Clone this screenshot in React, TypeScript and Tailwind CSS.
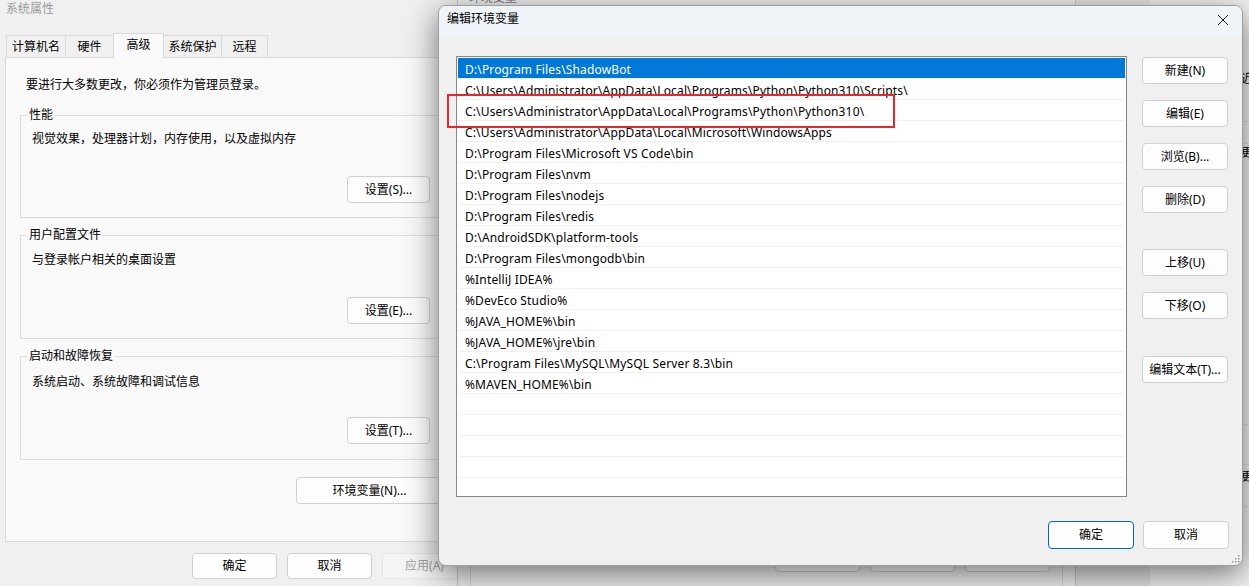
import React from 'react';

const paths = [
  'D:\\Program Files\\ShadowBot',
  'C:\\Users\\Administrator\\AppData\\Local\\Programs\\Python\\Python310\\Scripts\\',
  'C:\\Users\\Administrator\\AppData\\Local\\Programs\\Python\\Python310\\',
  'C:\\Users\\Administrator\\AppData\\Local\\Microsoft\\WindowsApps',
  'D:\\Program Files\\Microsoft VS Code\\bin',
  'D:\\Program Files\\nvm',
  'D:\\Program Files\\nodejs',
  'D:\\Program Files\\redis',
  'D:\\AndroidSDK\\platform-tools',
  'D:\\Program Files\\mongodb\\bin',
  '%IntelliJ IDEA%',
  '%DevEco Studio%',
  '%JAVA_HOME%\\bin',
  '%JAVA_HOME%\\jre\\bin',
  'C:\\Program Files\\MySQL\\MySQL Server 8.3\\bin',
  '%MAVEN_HOME%\\bin',
  '',
  '',
  '',
  '',
  '',
];

function WinButton({
  children,
  className = '',
  primary = false,
  disabled = false,
}: {
  children: React.ReactNode;
  className?: string;
  primary?: boolean;
  disabled?: boolean;
}) {
  return (
    <button
      className={
        'flex items-center justify-center rounded-[4px] border text-[12px] leading-[16px] ' +
        (primary
          ? 'border-[#0067c0] bg-[#fdfdfd] text-black '
          : disabled
          ? 'border-[#e5e5e5] bg-[#f5f5f5] text-[#a0a0a0] '
          : 'border-[#d0d0d0] bg-[#fdfdfd] text-black ') +
        className
      }
    >
      {children}
    </button>
  );
}

function GroupBox({
  title,
  text,
  textTop,
  buttonTop,
  buttonLabel,
  className = '',
  bottom = 'pb-[14px]',
}: {
  title: string;
  text: string;
  textTop: string;
  buttonTop: string;
  buttonLabel: string;
  className?: string;
  bottom?: string;
}) {
  return (
    <fieldset className={'flex flex-col border border-[#dcdcdc] pl-[6px] pr-[21px] ' + bottom + ' ' + className}>
      <legend className="px-[2px] leading-[16px]">{title}</legend>
      <p className={'ml-[5px] ' + textTop}>{text}</p>
      <WinButton className={'self-end w-[83px] h-[27px] ' + buttonTop}>{buttonLabel}</WinButton>
    </fieldset>
  );
}

function SystemProperties() {
  const tabs = [
    { label: '计算机名', w: 'w-[60px]' },
    { label: '硬件', w: 'w-[49px]' },
    { label: '高级', w: 'w-[51px]', active: true },
    { label: '系统保护', w: 'w-[59px]' },
    { label: '远程', w: 'w-[47px]' },
  ];
  return (
    <div className="absolute left-0 top-0 w-[474px] h-[586px] bg-[#f0f0f0] flex flex-col">
      <div className="h-[24px] pl-[6px] pt-px text-[#9b9b9b]">系统属性</div>
      <div className="h-[33px] flex items-end pl-[6px]">
        {tabs.map((t, i) => (
          <div
            key={t.label}
            className={
              'flex items-center justify-center border border-b-0 border-[#d9d9d9] ' +
              t.w +
              (i > 0 ? ' -ml-px' : '') +
              (t.active ? ' relative z-10 h-[25px] -mb-px bg-[#f9f9f9] pb-[3px]' : ' h-[22px] bg-[#f0f0f0]')
            }
          >
            {t.label}
          </div>
        ))}
      </div>
      <div className="mx-[5px] h-[485px] border border-[#d9d9d9] bg-[#f9f9f9] pt-[19px] pl-[14px] pr-[16px] flex flex-col">
        <p className="ml-[6px]">要进行大多数更改，你必须作为管理员登录。</p>
        <GroupBox
          className="mt-[14px]"
          title="性能"
          text="视觉效果，处理器计划，内存使用，以及虚拟内存"
          textTop="mt-[8px]"
          buttonTop="mt-[29px]"
          buttonLabel="设置(S)..."
        />
        <GroupBox
          className="mt-[9px]"
          title="用户配置文件"
          text="与登录帐户相关的桌面设置"
          textTop="mt-[9px]"
          buttonTop="mt-[29px]"
          buttonLabel="设置(E)..."
        />
        <GroupBox
          className="mt-[9px]"
          title="启动和故障恢复"
          text="系统启动、系统故障和调试信息"
          textTop="mt-[10px]"
          buttonTop="mt-[27px]"
          buttonLabel="设置(T)..."
          bottom="pb-[15px]"
        />
        <WinButton className="self-end mr-[9px] mt-[17px] w-[147px] h-[27px]">环境变量(N)...</WinButton>
      </div>
      <div className="mt-[11px] flex justify-end gap-[10px] pr-[7px]">
        <WinButton className="w-[85px] h-[26px]">确定</WinButton>
        <WinButton className="w-[85px] h-[26px]">取消</WinButton>
        <WinButton className="w-[85px] h-[26px]" disabled>
          应用(A)
        </WinButton>
      </div>
    </div>
  );
}

function EnvWindow() {
  return (
    <div className="absolute left-[457px] top-[-20px] w-[619px] h-[640px] border-x border-[#c9c9c9] bg-[#f0f0f0] flex flex-col">
      <div className="h-[36px] flex items-center pl-[11px] text-[#777]">环境变量</div>
      <div className="flex-1 mx-[12px] border-x border-[#d5d5d5]">
        <div className="mt-[530px] flex justify-end gap-[10px] pr-[12px]">
          <WinButton className="w-[85px] h-[26px]">新建(W)...</WinButton>
          <WinButton className="w-[85px] h-[26px]">编辑(I)...</WinButton>
          <WinButton className="w-[85px] h-[26px]">删除(L)</WinButton>
        </div>
      </div>
    </div>
  );
}

function RightWindow() {
  return (
    <div className="absolute left-[1150px] top-0 w-[200px] h-[586px] bg-[#f3f3f3] flex flex-col">
      <div className="h-[70px]" />
      <div className="h-[18px] pl-[91px] leading-[18px]">近</div>
      <div className="h-[34px] border-b border-[#e2e2e2]" />
      <div className="h-[22px] border-b border-[#e2e2e2]" />
      <div className="h-[18px] pl-[91px] leading-[18px]">更</div>
      <div className="h-[263px] border-b border-[#e2e2e2]" />
      <div className="h-[40px] border-b border-[#e2e2e2]" />
      <div className="h-[24px] pl-[91px] leading-[24px]">更</div>
      <div className="h-[18px] border-b border-[#e2e2e2]" />
    </div>
  );
}

function EditDialog() {
  return (
    <div className="absolute left-[438px] top-[5px] w-[805px] h-[561px] rounded-[8px] border border-[#9e9e9e] bg-[#f0f0f0] shadow-[0_8px_32px_rgba(0,0,0,0.55)] flex flex-col overflow-hidden">
      <div className="h-[30px] shrink-0 bg-[#eff4f9] flex items-start justify-between pl-[8px] pt-[5px] pr-[10px]">
        <span>编辑环境变量</span>
        <svg width="12" height="12" viewBox="0 0 12 12" className="mt-[3px] mr-[3px]">
          <path d="M1 1 L11 11 M11 1 L1 11" stroke="#1b1b1b" strokeWidth="1" fill="none" />
        </svg>
      </div>
      <div className="flex pl-[17px] pt-[20px]">
        <div className="w-[671px] h-[441px] border border-[#868686] bg-white p-px overflow-hidden">
          {paths.map((p, i) => (
            <div
              key={i}
              className={
                'h-[21px] flex items-center pl-[7px] pt-[3px] border-b border-[#f0f0f0] whitespace-nowrap tracking-[0.15px] ' +
                (i === 0 ? 'bg-[#0078d7] text-white' : 'text-black')
              }
            >
              {p}
            </div>
          ))}
        </div>
        <div className="ml-[15px] w-[86px] flex flex-col">
          <WinButton className="mt-[1px] h-[27px]">新建(N)</WinButton>
          <WinButton className="mt-[16px] h-[27px]">编辑(E)</WinButton>
          <WinButton className="mt-[16px] h-[27px]">浏览(B)...</WinButton>
          <WinButton className="mt-[16px] h-[27px]">删除(D)</WinButton>
          <WinButton className="mt-[36px] h-[27px]">上移(U)</WinButton>
          <WinButton className="mt-[16px] h-[27px]">下移(O)</WinButton>
          <WinButton className="mt-[37px] h-[27px]">编辑文本(T)...</WinButton>
        </div>
      </div>
      <div className="mt-[24px] flex justify-end gap-[9px] pr-[13px]">
        <WinButton primary className="w-[86px] h-[28px]">
          确定
        </WinButton>
        <WinButton className="w-[86px] h-[28px]">取消</WinButton>
      </div>
      <div className="absolute left-[8px] top-[88px] w-[448px] h-[34px] border-2 border-[#e8262b]" />
      <svg width="8" height="8" viewBox="0 0 8 8" className="absolute right-[2px] bottom-[2px]">
        <rect x="6" y="0" width="1.5" height="1.5" fill="#9a9a9a" />
        <rect x="3" y="3" width="1.5" height="1.5" fill="#9a9a9a" />
        <rect x="6" y="3" width="1.5" height="1.5" fill="#9a9a9a" />
        <rect x="0" y="6" width="1.5" height="1.5" fill="#9a9a9a" />
        <rect x="3" y="6" width="1.5" height="1.5" fill="#9a9a9a" />
        <rect x="6" y="6" width="1.5" height="1.5" fill="#9a9a9a" />
      </svg>
    </div>
  );
}

export default function App() {
  return (
    <div className="relative w-[1249px] h-[586px] overflow-hidden bg-[#e6e6e6] font-['Noto_Sans','Noto_Sans_CJK_SC',sans-serif] text-[12px] leading-[16px] text-black">
      <RightWindow />
      <SystemProperties />
      <EnvWindow />
      <EditDialog />
    </div>
  );
}
